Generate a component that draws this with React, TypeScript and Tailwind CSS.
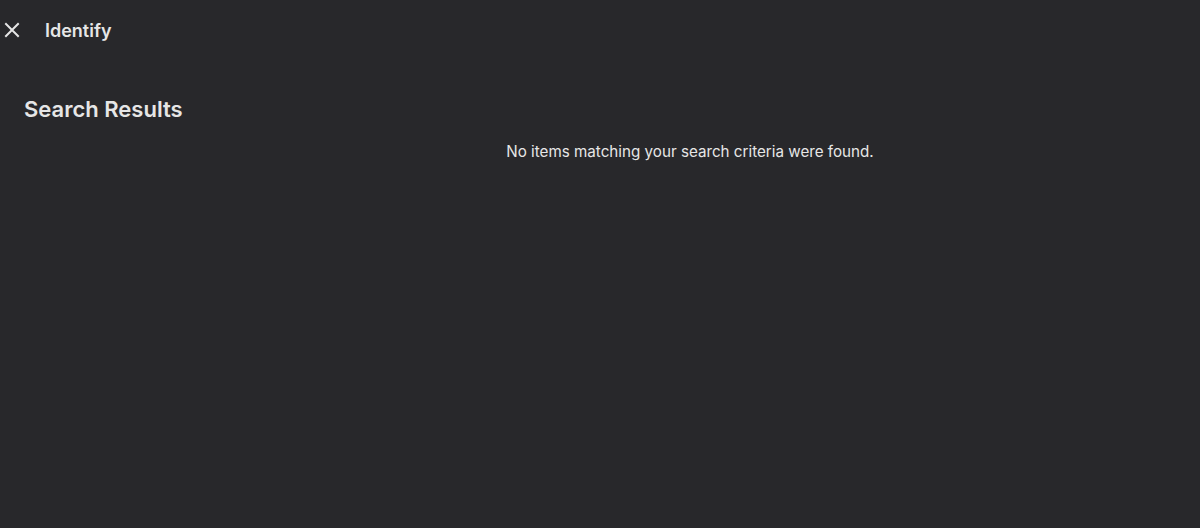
import React from "react";

export default function App() {
  return (
    <div className="w-[1200px] h-[528px] bg-[#28282b] text-[#e6e6e6] overflow-hidden" style={{ fontFamily: "Inter, 'Noto Sans', sans-serif" }}>
      <div className="flex items-center h-[60px]">
        <button className="w-[24px] h-[24px] ml-[0px] flex items-center justify-center text-[#e6e6e6]">
          <svg width="18" height="18" viewBox="0 0 18 18" fill="none" stroke="currentColor" strokeWidth="2" strokeLinecap="square">
            <path d="M3 3L15 15M15 3L3 15" />
          </svg>
        </button>
        <div className="ml-[21px] text-[18px] font-semibold leading-[24px] mt-[1px]">Identify</div>
      </div>
      <div className="pl-[24px] pt-[35px] text-[22px] font-semibold leading-[28px]">Search Results</div>
      <div className="flex pl-[180px] mt-[19px]">
        <div className="flex-1 text-center text-[15.2px] leading-[20px]">No items matching your search criteria were found.</div>
      </div>
    </div>
  );
}
